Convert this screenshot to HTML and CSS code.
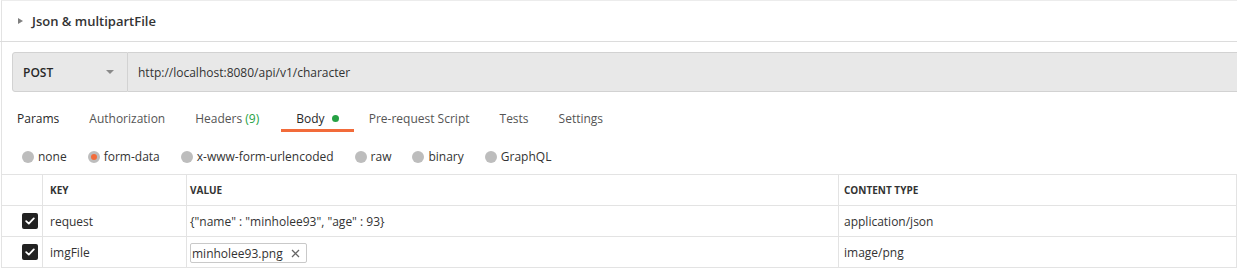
FILE: index.html
```html
<!DOCTYPE html>
<html>
<head>
<meta charset="utf-8">
<link rel="stylesheet" href="styles.css">
</head>
<body>
<div class="panel">
  <div class="title-bar">
    <span class="caret"></span>
    <span class="title">Json &amp; multipartFile</span>
  </div>
  <div class="url-row">
    <div class="method">
      <span class="method-name">POST</span>
      <span class="method-arrow"></span>
    </div>
    <div class="url">http://localhost:8080/api/v1/character</div>
  </div>
  <div class="tabs">
    <div class="tab">Params</div>
    <div class="tab muted">Authorization</div>
    <div class="tab muted headers">Headers <span class="count">(9)</span></div>
    <div class="tab active">Body <span class="dot"></span></div>
    <div class="tab muted">Pre-request Script</div>
    <div class="tab muted">Tests</div>
    <div class="tab muted">Settings</div>
  </div>
  <div class="radios">
    <label class="radio"><span class="circle"></span>none</label>
    <label class="radio"><span class="circle on"></span>form-data</label>
    <label class="radio"><span class="circle"></span>x-www-form-urlencoded</label>
    <label class="radio"><span class="circle"></span>raw</label>
    <label class="radio"><span class="circle"></span>binary</label>
    <label class="radio"><span class="circle"></span>GraphQL</label>
  </div>
  <div class="table">
    <div class="row head">
      <div class="cell c-check"></div>
      <div class="cell c-key">KEY</div>
      <div class="cell c-val">VALUE</div>
      <div class="cell c-ct">CONTENT TYPE</div>
    </div>
    <div class="row">
      <div class="cell c-check"><span class="check"><svg width="10" height="8" viewBox="0 0 10 8"><path d="M1.2 4.2 L3.8 6.6 L8.8 1.4" fill="none" stroke="#fff" stroke-width="1.8" stroke-linecap="round" stroke-linejoin="round"/></svg></span></div>
      <div class="cell c-key">request</div>
      <div class="cell c-val">{"name" : "minholee93", "age" : 93}</div>
      <div class="cell c-ct">application/json</div>
    </div>
    <div class="row">
      <div class="cell c-check"><span class="check"><svg width="10" height="8" viewBox="0 0 10 8"><path d="M1.2 4.2 L3.8 6.6 L8.8 1.4" fill="none" stroke="#fff" stroke-width="1.8" stroke-linecap="round" stroke-linejoin="round"/></svg></span></div>
      <div class="cell c-key">imgFile</div>
      <div class="cell c-val"><span class="chip">minholee93.png<svg class="x" width="9" height="9" viewBox="0 0 9 9"><path d="M1 1 L8 8 M8 1 L1 8" stroke="#666" stroke-width="1.3"/></svg></span></div>
      <div class="cell c-ct">image/png</div>
    </div>
  </div>
</div>
</body>
</html>
```
FILE: styles.css
```css
html, body {
  margin: 0;
  padding: 0;
  background: #fff;
  overflow: hidden;
}
body {
  font-family: "Open Sans", "Liberation Sans", sans-serif;
  font-size: 12px;
  color: #333;
  width: 1237px;
  height: 270px;
}
.panel {
  margin-left: 1px;
  border-left: 1px solid #e3e3e3;
  border-top: 1px solid #ececec;
  width: 1240px;
}
.title-bar {
  height: 40px;
  border-bottom: 1px solid #dcdcdc;
  display: flex;
  align-items: center;
  padding-left: 16px;
  margin-left: -2px;
}
.caret {
  width: 0;
  height: 0;
  border-top: 3.5px solid transparent;
  border-bottom: 3.5px solid transparent;
  border-left: 5px solid #808080;
  margin-left: 2px;
  margin-right: 9px;
}
.title {
  font-size: 13px;
  font-weight: 600;
  color: #333;
}
.url-row {
  display: flex;
  margin: 10px 0 0 10px;
  height: 40px;
}
.method {
  box-sizing: border-box;
  width: 116px;
  height: 40px;
  background: #e8e8e8;
  border: 1px solid #d2d2d2;
  border-radius: 3px 0 0 3px;
  display: flex;
  align-items: center;
  justify-content: space-between;
  padding: 0 13px 0 10px;
}
.method-name {
  font-weight: 600;
  font-size: 12px;
  color: #282828;
}
.method-arrow {
  width: 0;
  height: 0;
  border-left: 4px solid transparent;
  border-right: 4px solid transparent;
  border-top: 4px solid #8a8a8a;
}
.url {
  flex: 1;
  box-sizing: border-box;
  height: 40px;
  background: #e8e8e8;
  border: 1px solid #d2d2d2;
  border-left: none;
  display: flex;
  align-items: center;
  padding-left: 10px;
  color: #333;
}
.tabs {
  display: flex;
  height: 25px;
  margin-top: 15px;
}
.tab {
  padding: 0 15px;
  display: flex;
  align-items: center;
  height: 22px;
  border-bottom: 3px solid transparent;
  color: #282828;
  white-space: pre;
}
.tab.headers {
  padding-right: 22px;
}
.tab.muted {
  color: #555;
}
.tab.active {
  border-bottom-color: #f26b3a;
  color: #282828;
}
.count {
  color: #26a144;
}
.dot {
  display: inline-block;
  width: 7px;
  height: 7px;
  border-radius: 50%;
  background: #26a144;
  margin-left: 4px;
}
.radios {
  display: flex;
  align-items: center;
  height: 31px;
  padding-left: 20px;
  margin-top: 9px;
  gap: 21px;
}
.radio {
  display: flex;
  align-items: center;
  gap: 4px;
  color: #333;
}
.circle {
  box-sizing: border-box;
  width: 12px;
  height: 12px;
  border-radius: 50%;
  background: #bdbdbd;
}
.circle.on {
  background: #f26b3a;
  border: 3px solid #bdbdbd;
}
.table {
  margin-top: 2px;
  margin-left: -1px;
  width: 1235px;
  border-top: 1px solid #e3e3e3;
  border-left: 1px solid #e3e3e3;
}
.row {
  display: flex;
  height: 30px;
  border-bottom: 1px solid #e3e3e3;
}
.cell {
  box-sizing: border-box;
  display: flex;
  align-items: center;
  border-right: 1px solid #e3e3e3;
  white-space: pre;
}
.c-check { width: 41px; padding-left: 20px; }
.c-key { width: 144px; padding-left: 7px; }
.c-val { width: 652px; padding-left: 3px; }
.c-ct { flex: 1; padding-left: 5px; }
.head .cell {
  font-size: 10px;
  font-weight: 700;
  color: #333;
}
.check {
  width: 16px;
  height: 16px;
  border-radius: 2px;
  background: #222;
  display: flex;
  align-items: center;
  justify-content: center;
}
.chip {
  box-sizing: border-box;
  height: 20px;
  border: 1px solid #c9c9c9;
  border-radius: 2px;
  display: inline-flex;
  align-items: center;
  padding: 0 6px 0 1px;
  gap: 8px;
  margin-top: 2px;
  color: #333;
}
```
